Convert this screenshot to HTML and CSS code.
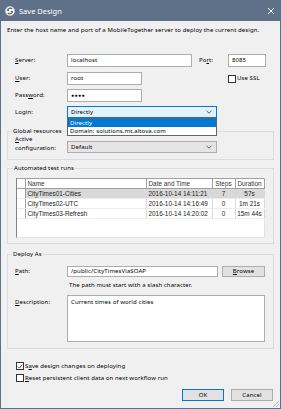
FILE: index.html
```html
<!DOCTYPE html>
<html lang="en">
<head>
    <meta charset="UTF-8">
    <title>Save Design</title>
    <link rel="stylesheet" href="styles.css">
</head>
<body>
    <div class="window">
        <div class="titlebar">
            <svg class="app-icon" width="10" height="10" viewBox="0 0 10 10">
                <circle cx="5" cy="5" r="4.6" fill="#fff" stroke="#c8ccd2" stroke-width="0.6"/>
                <path d="M7.2 3.2 A2.6 2.6 0 0 0 2.6 4.2 L4.2 4.6 M2.8 6.8 A2.6 2.6 0 0 0 7.4 5.8 L5.8 5.4" fill="none" stroke="#5a5f66" stroke-width="1.2"/>
            </svg>
            <span class="title">Save Design</span>
            <svg class="close" width="8" height="8" viewBox="0 0 8 8">
                <path d="M1 1 L7 7 M7 1 L1 7" stroke="#fff" stroke-width="1"/>
            </svg>
        </div>

        <div class="client">
            <p class="intro">Enter the host name and port of a MobileTogether server to deploy the current design.</p>

            <div class="conn">
                <div class="row r-server">
                    <span class="lbl"><u>S</u>erver:</span>
                    <div class="textbox w-server">localhost</div>
                    <span class="lbl port-lbl">Po<u>r</u>t:</span>
                    <div class="textbox w-port">8085</div>
                </div>
                <div class="row r-user">
                    <span class="lbl"><u>U</u>ser:</span>
                    <div class="textbox w-short">root</div>
                    <span class="check ssl"><span class="box"></span>Use SSL</span>
                </div>
                <div class="row r-pass">
                    <span class="lbl">Pass<u>w</u>ord:</span>
                    <div class="textbox w-short dots">&#9679;&#9679;&#9679;&#9679;</div>
                </div>
                <div class="row r-login">
                    <span class="lbl">Login:</span>
                    <div class="combo focused w-combo">
                        <span>Directly</span>
                        <svg class="chev" width="6" height="4" viewBox="0 0 6 4"><path d="M0.5 0.8 L3 3.2 L5.5 0.8" fill="none" stroke="#555" stroke-width="0.9"/></svg>
                        <div class="droplist">
                            <div class="item selected">Directly</div>
                            <div class="item">Domain: solutions.mt.altova.com</div>
                        </div>
                    </div>
                </div>
            </div>

            <fieldset class="group g-global">
                <legend>Global resources</legend>
                <div class="row-top">
                    <span class="lbl two-line"><u>A</u>ctive<br>configuration:</span>
                    <div class="combo w-combo cfg">
                        <span>Default</span>
                        <svg class="chev" width="6" height="4" viewBox="0 0 6 4"><path d="M0.5 0.8 L3 3.2 L5.5 0.8" fill="none" stroke="#555" stroke-width="0.9"/></svg>
                    </div>
                </div>
            </fieldset>

            <fieldset class="group g-tests">
                <legend>Automated test runs</legend>
                <div class="grid-box">
                    <table class="runs">
                        <colgroup>
                            <col class="c-head">
                            <col class="c-name">
                            <col class="c-date">
                            <col class="c-steps">
                            <col class="c-dur">
                        </colgroup>
                        <thead>
                            <tr>
                                <th></th>
                                <th>Name</th>
                                <th>Date and Time</th>
                                <th class="ctr">Steps</th>
                                <th class="ctr">Duration</th>
                            </tr>
                        </thead>
                        <tbody>
                            <tr class="sel">
                                <td class="rh"></td>
                                <td>CityTimes01-Cities</td>
                                <td>2016-10-14 14:11:21</td>
                                <td class="ctr">7</td>
                                <td class="ctr">57s</td>
                            </tr>
                            <tr>
                                <td class="rh"></td>
                                <td>CityTimes02-UTC</td>
                                <td>2016-10-14 14:16:49</td>
                                <td class="ctr">0</td>
                                <td class="ctr">1m 21s</td>
                            </tr>
                            <tr>
                                <td class="rh"></td>
                                <td>CityTimes03-Refresh</td>
                                <td>2016-10-14 14:20:02</td>
                                <td class="ctr">0</td>
                                <td class="ctr">15m 44s</td>
                            </tr>
                        </tbody>
                    </table>
                </div>
            </fieldset>

            <fieldset class="group g-deploy">
                <legend>Deploy As</legend>
                <div class="row r-path">
                    <span class="lbl"><u>P</u>ath:</span>
                    <div class="textbox w-path">/public/CityTimesViaSOAP</div>
                    <div class="button browse"><u>B</u>rowse</div>
                </div>
                <p class="hint">The path must start with a slash character.</p>
                <div class="row-top r-desc">
                    <span class="lbl desc-lbl"><u>D</u>escription:</span>
                    <div class="textarea">Current times of world cities</div>
                </div>
            </fieldset>

            <div class="options">
                <span class="check"><span class="box checked"><svg width="7" height="7" viewBox="0 0 7 7"><path d="M1 3.6 L2.8 5.4 L6 1.4" fill="none" stroke="#222" stroke-width="0.9"/></svg></span>S<u>a</u>ve design changes on deploying</span>
                <span class="check"><span class="box"></span><u>R</u>eset persistent client data on next workflow run</span>
            </div>

            <div class="actions">
                <div class="button default">OK</div>
                <div class="button">Cancel</div>
            </div>

            <svg class="grip" width="8" height="8" viewBox="0 0 8 8">
                <path d="M7 1 L1 7 M7 4 L4 7" stroke="#a8a8a8" stroke-width="0.8"/>
            </svg>
        </div>
    </div>
</body>
</html>
```

FILE: styles.css
```css
* {
    box-sizing: border-box;
}
body {
    margin: 0;
    font-family: "Noto Sans", sans-serif;
    font-size: 6px;
    letter-spacing: 0.1px;
    color: #000;
}
.window {
    width: 281px;
    height: 409px;
    background: #5f7089;
    padding: 0 1px 1px;
    display: flex;
    flex-direction: column;
}
.titlebar {
    height: 21px;
    display: flex;
    align-items: center;
    padding-left: 4px;
    color: #fff;
}
.title {
    font-size: 7.5px;
    letter-spacing: 0;
    margin-left: 4px;
    flex: 1;
}
.close {
    margin-right: 5px;
}
.client {
    flex: 1;
    background: #f0f0f0;
    position: relative;
}
.intro {
    margin: 5px 0 0 6px;
    line-height: 9px;
}
u {
    text-decoration-thickness: 0.5px;
    text-underline-offset: 1px;
}

/* connection rows */
.conn {
    margin-top: 19px;
    padding-left: 14px;
}
.row {
    display: flex;
    align-items: center;
    height: 13px;
}
.r-user {
    margin-top: 5px;
}
.r-pass,
.r-login {
    margin-top: 4px;
}
.r-login {
    height: 12px;
}
.lbl {
    width: 52px;
    flex: none;
    line-height: 9px;
}
.port-lbl {
    width: 29px;
    margin-left: 7px;
}
.textbox {
    height: 13px;
    border: 1px solid #adadad;
    background: #fff;
    padding: 0 3px;
    line-height: 11px;
    white-space: nowrap;
}
.w-server { width: 125px; }
.w-port { width: 38px; }
.w-short { width: 75px; }
.w-path { width: 151px; }
.dots {
    font-size: 5px;
    letter-spacing: 0.5px;
}

.check {
    display: flex;
    align-items: center;
    line-height: 9px;
}
.check .box {
    width: 8px;
    height: 8px;
    border: 1px solid #333;
    background: #fff;
    margin-right: 1px;
    display: flex;
    align-items: center;
    justify-content: center;
}
.ssl {
    margin-left: 86px;
}

/* combo boxes */
.combo {
    position: relative;
    height: 12px;
    border: 1px solid #acacac;
    background: #e5e5e5;
    padding: 0 3px;
    display: flex;
    align-items: center;
    justify-content: space-between;
}
.w-combo {
    width: 150px;
}
.combo.focused {
    border-color: #0078d7;
    background: #e5f1fb;
}
.chev {
    margin-right: 1px;
}
.droplist {
    position: absolute;
    top: 11px;
    left: -1px;
    width: 150px;
    border: 1px solid #646464;
    background: #fff;
    z-index: 2;
}
.droplist .item {
    height: 8px;
    line-height: 8px;
    padding-left: 2px;
}
.droplist .selected {
    background: #0078d7;
    color: #fff;
}

/* group boxes */
.group {
    margin: 0 0 0 6px;
    width: 267px;
    border: 1px solid #dcdcdc;
    padding: 0 7px;
    min-width: 0;
}
.group legend {
    padding: 0 1px;
    margin-left: -3px;
    line-height: 9px;
}
.g-global {
    margin-top: 9px;
    padding-bottom: 6px;
}
.row-top {
    display: flex;
    align-items: flex-start;
}
.two-line {
    margin-top: -1px;
}
.cfg {
    margin-top: 5px;
}

.g-tests {
    margin-top: 4px;
    padding: 5px 0 5px 8px;
}
.grid-box {
    width: 249px;
    height: 60px;
    background: #fff;
    border-top: 1px solid #a0a0a0;
    border-left: 1px solid #828282;
    border-right: 1px solid #e3e3e3;
    border-bottom: 1px solid #e3e3e3;
}
.runs {
    border-collapse: collapse;
    table-layout: fixed;
    width: 247px;
    font-family: "Liberation Sans", Arial, sans-serif;
    font-size: 6.4px;
    letter-spacing: 0;
    color: #222;
}
.c-head { width: 8px; }
.c-name { width: 121px; }
.c-date { width: 66px; }
.c-steps { width: 23px; }
.c-dur { width: 29px; }
.runs th,
.runs td {
    text-align: left;
    font-weight: normal;
    padding: 0 0 0 2px;
    white-space: nowrap;
    overflow: hidden;
}
.runs th {
    height: 9px;
    border-right: 1px solid #a0a0a0;
    border-bottom: 1px solid #a0a0a0;
    color: #333;
}
.runs td {
    height: 10px;
    border-right: 1px solid #d8d8d8;
    border-bottom: 1px solid #ececec;
}
.runs .ctr {
    text-align: center;
    padding: 0;
}
.runs td.rh {
    border-right: 1px solid #a0a0a0;
}
.runs tr.sel td {
    background: #d9d9d9;
}
.runs tr.sel td.rh {
    background: #fff;
}

.g-deploy {
    margin-top: 6px;
    padding-bottom: 6px;
}
.r-path {
    margin-top: 7px;
    height: 11px;
}
.r-path .textbox {
    height: 11px;
    line-height: 9px;
}
.button {
    height: 11px;
    border: 1px solid #adadad;
    background: #e1e1e1;
    text-align: center;
    line-height: 9px;
}
.browse {
    width: 43px;
    margin-left: 4px;
}
.hint {
    margin: 4px 0 0 54px;
    line-height: 8px;
}
.r-desc {
    margin-top: 6px;
}
.desc-lbl {
    margin-top: 3px;
}
.textarea {
    width: 198px;
    height: 47px;
    border: 1px solid #adadad;
    background: #fff;
    padding: 2px 3px;
    line-height: 9px;
}

/* bottom */
.options {
    margin: 13px 0 0 15px;
    display: flex;
    flex-direction: column;
    gap: 4px;
}
.options .check {
    height: 8px;
}
.actions {
    display: flex;
    justify-content: flex-end;
    gap: 7px;
    margin: 7px 7px 0 0;
}
.actions .button {
    width: 42px;
    height: 12px;
    line-height: 10px;
}
.actions .default {
    border-color: #0078d7;
}
.grip {
    position: absolute;
    right: 0;
    bottom: 0;
}
```
